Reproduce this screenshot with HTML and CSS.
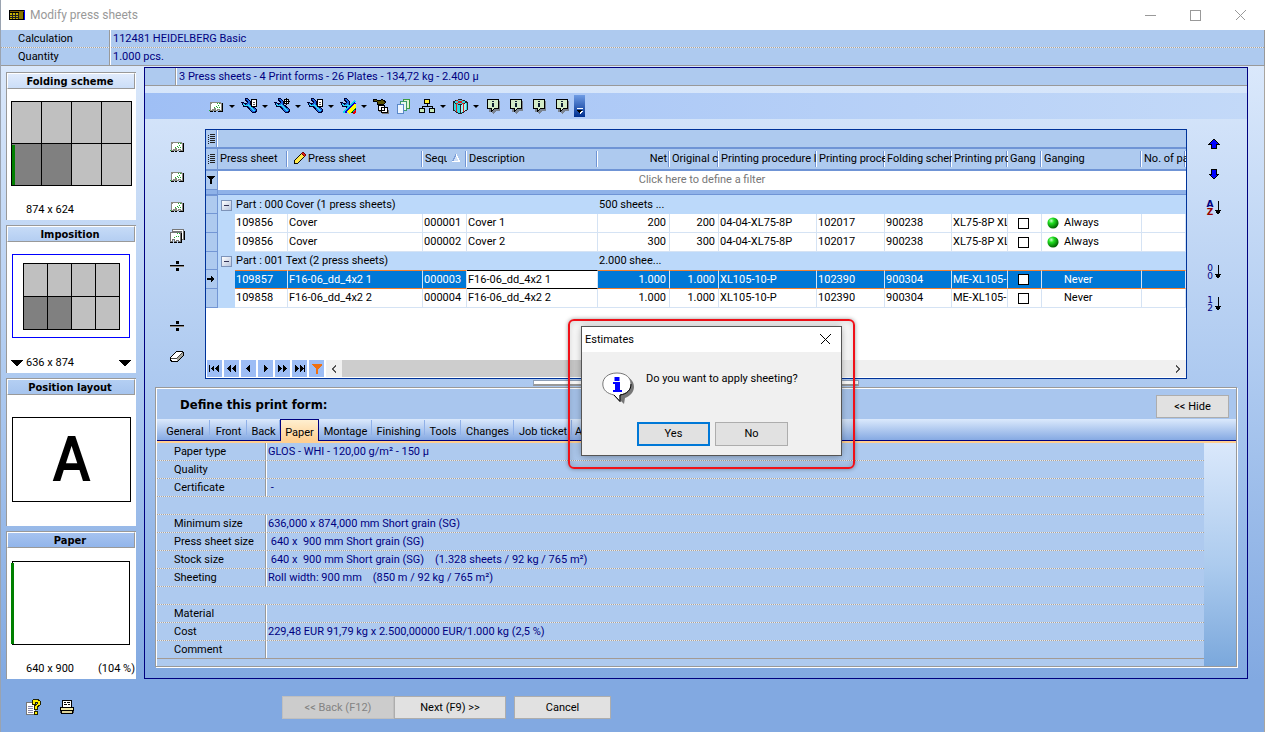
FILE: index.html
```html
<!DOCTYPE html>
<html lang="en">
<head>
<meta charset="utf-8">
<title>Modify press sheets</title>
<link rel="stylesheet" href="styles.css">
</head>
<body>
<svg class="defs" aria-hidden="true">
  <defs>
    <radialGradient id="ball" cx="35%" cy="30%" r="70%"><stop offset="0" stop-color="#c8ffc8"/><stop offset=".35" stop-color="#20e020"/><stop offset="1" stop-color="#006000"/></radialGradient>
    <symbol id="sheet" viewBox="0 0 16 16"><path d="M2.500 4.500h10v1h1v7h-2v-1h-2v1h-2v-2h-1v2h-1v-1h-1v1h-2v-7h1z" fill="#fff" stroke="#8a8a82"/><path d="M14 5v9M10 13.500h4M2 13.500h3M6 13.500h2" stroke="#000"/><path d="M1 12h1v1h-1zM9 5h1v1h-1zM11 5h1v1h-1zM10 7h1v1h-1zM8 8h1v1h-1zM6 9h1v1h-1zM11 9h1v1h-1zM9 9h1v1h-1z" fill="#1faf2f"/></symbol>
    <symbol id="sheets" viewBox="0 0 16 16"><path d="M3.500 1.500h11v10h-2v-8h-9z" fill="#fff" stroke="#777"/><path d="M1.500 4.500h10v9h-2v-1h-2v1h-2v-2h-2v2h-2z" fill="#fff" stroke="#777"/><path d="M12.500 5v9M9 14.500h4M15.500 3v9M1 14.500h3M5 14.500h3" stroke="#000"/><path d="M8 5h1v1h-1zM10 5h1v1h-1zM7 8h1v1h-1zM9 8h1v1h-1zM5 9h1v1h-1z" fill="#1faf2f"/></symbol>
    <symbol id="wrench" viewBox="0 0 16 16"><path d="M.5 4.500L3 8.500h3l5.500 6H14l1-1V11L9 6V3L6.500.5H4v1L6 3.500V5L4.500 6 2 4.500z" fill="#1d66e0" stroke="#00002c"/><path d="M2 6l2 1.500L7.500 7l6 6" stroke="#30d8f8" stroke-width="1" fill="none"/></symbol>
    <symbol id="divide" viewBox="0 0 16 16"><path d="M1 7h14v1H1zM7 3h3v3H7zM7 10h3v3H7z"/><path d="M1 8h14v1H1z" fill="#8a8278"/></symbol>
    <symbol id="note" viewBox="0 0 16 16"><path d="M4 3h11v10h-4l-2 3H8l-1-2H4z" fill="#666" opacity=".7"/><path d="M2.500 1.500h11v9h-4l-3 3v-3h-4z" fill="#d4ecc8" stroke="#000"/><path d="M7 3h2v1H7zM7 5h2v4H7z" fill="#123"/></symbol>
    <symbol id="sortArrow" viewBox="0 0 6 16"><path d="M3 1v13" stroke="#000"/><path d="M0 10h6l-2 4H2z"/></symbol>
    <symbol id="list" viewBox="0 0 8 10"><path d="M0 1h1v1H0zM0 3h1v1H0zM0 5h1v1H0zM0 7h1v1H0zM0 9h1v1H0zM2 0h5v1H2zM2 2h5v1H2zM2 4h5v1H2zM2 6h5v1H2zM2 8h5v1H2z" fill="#222"/></symbol>
    <symbol id="funnel" viewBox="0 0 10 10"><path d="M0 0h10v1L6 5v5H4V5L0 1z"/></symbol>
  </defs>
</svg>

<div class="window">
  <header class="titlebar">
    <svg class="app-icon" viewBox="0 0 16 10"><path d="M0 0h16v10H0z"/><path d="M1 1h14v1H1z" fill="#806000"/><path d="M1 3h9v6H1z" fill="#c8b400"/><path d="M3 3v6M6 3v6M9 3v6M1 5h9M1 7h9" stroke="#222"/><path d="M10 2h4v7h-4z" fill="#8a7600"/><path d="M15 0h1v10h-1z" fill="#00f"/></svg>
    <h1 class="title">Modify press sheets</h1>
    <div class="win-buttons">
      <button aria-label="Minimize"><svg viewBox="0 0 11 11"><path d="M0 5.500h11" stroke="#999"/></svg></button>
      <button aria-label="Maximize"><svg viewBox="0 0 11 11"><path d="M.5.500h10v10H.5z" fill="none" stroke="#999"/></svg></button>
      <button aria-label="Close"><svg viewBox="0 0 11 11"><path d="M.5.500l10 10M10.500.500l-10 10" stroke="#999"/></svg></button>
    </div>
  </header>
  <dl class="summary">
    <div><dt>Calculation</dt><dd>112481 HEIDELBERG Basic</dd></div>
    <div><dt>Quantity</dt><dd>1.000 pcs.</dd></div>
  </dl>

  <div class="workspace">
    <aside class="sidebar">
      <section class="card">
        <h2>Folding scheme</h2>
        <svg class="drawing" viewBox="0 0 128 118"><path d="M4.500 12.500h120v84h-120z" fill="#c0c0c0"/><path d="M5 54h60v42H5z" fill="#808080"/><path d="M4.500 12.500h120v84h-120zM34.500 12v84M64.500 12v84M94.500 12v84M4 54.500h120" fill="none" stroke="#000"/><path d="M5 56h3v40H5z" fill="#008000"/></svg>
        <p class="foot"><span>874 x 624</span></p>
      </section>
      <section class="card tint2">
        <h2>Imposition</h2>
        <svg class="drawing" viewBox="0 0 128 118"><path d="M5.500 12.500h117v83h-117z" fill="none" stroke="#00f"/><path d="M16.500 21.500h96v66h-96z" fill="#c0c0c0"/><path d="M17 54h48v33H17z" fill="#808080"/><path d="M16.500 21.500h96v66h-96zM40.500 21v66M64.500 21v66M88.500 21v66M16 54.500h96" fill="none" stroke="#000"/></svg>
        <p class="foot"><svg class="tri tri-left" viewBox="0 0 12 7"><path d="M0 0h12L6 7z"/></svg><span>636 x 874</span><svg class="tri" viewBox="0 0 12 7"><path d="M0 0h12L6 7z"/></svg></p>
      </section>
      <section class="card tint3">
        <h2>Position layout</h2>
        <div class="position-page">A</div>
      </section>
      <section class="card tint4">
        <h2>Paper</h2>
        <svg class="drawing" viewBox="0 0 128 118"><path d="M5.500 13.500h117v83h-117z" fill="none" stroke="#000"/><path d="M4 15h3v81H4z" fill="#008000"/></svg>
        <p class="foot"><span>640 x 900</span><span>(104 %)</span></p>
      </section>
    </aside>

    <main class="main">
      <p class="totals"><span>3 Press sheets - 4 Print forms - 26 Plates - 134,72 kg - 2.400 µ</span></p>
      <div class="toolbar" role="toolbar" aria-label="Press sheet tools">
        <button class="tool" aria-label="Press sheet"><svg viewBox="0 0 16 16"><use href="#sheet"/></svg></button><button class="drop" aria-label="More"></button>
        <button class="tool" aria-label="Edit sheet"><svg viewBox="0 0 16 16"><use href="#wrench"/><path d="M10.500 1.500h5v7h-5z" fill="#fff" stroke="#000"/><path d="M12 4.500h2M12 6.500h2" stroke="#555"/></svg></button><button class="drop" aria-label="More"></button>
        <button class="tool" aria-label="Edit marks"><svg viewBox="0 0 16 16"><use href="#wrench"/><circle cx="12.500" cy="3.500" r="2.500" fill="#fff" stroke="#000"/><path d="M12.500 0v7M9 3.500h7" stroke="#000"/></svg></button><button class="drop" aria-label="More"></button>
        <button class="tool" aria-label="Edit page"><svg viewBox="0 0 16 16"><use href="#wrench"/><path d="M10.500 1.500h5v7h-5z" fill="#fff" stroke="#000"/><path d="M12 4.500h2M12 6.500h2" stroke="#555"/></svg></button><button class="drop" aria-label="More"></button>
        <button class="tool" aria-label="Edit colours"><svg viewBox="0 0 16 16"><use href="#wrench"/><path d="M3 15L15 3" stroke="#10d8f0" stroke-width="2"/><path d="M5 15L15 5" stroke="#10c" stroke-width="2"/><path d="M8 15l8-8" stroke="#ff0" stroke-width="3"/><path d="M11 15l5-5" stroke="#080" stroke-width="1"/><path d="M13 16l3-3" stroke="#e00" stroke-width="2"/></svg></button><button class="drop" aria-label="More"></button>
        <button class="tool" aria-label="Move sheets"><svg viewBox="0 0 16 16"><path d="M6 12h10v4H9v-2H6z" fill="#777"/><path d="M0 1h2l2 1h4l1-1 4 3-3 3-1-1H4v-2L0 3z" fill="#5a5200" stroke="#000"/><path d="M5.500 7.500h6v5h-6zM8.500 9.500h6v5h-6z" fill="#fff" stroke="#000"/></svg></button>
        <button class="tool" aria-label="Copy sheets"><svg viewBox="0 0 16 16"><path d="M7.500 1.500h6v9h-6z" fill="#dff5d0" stroke="#3c9a3c"/><path d="M4.500 3.500h6v9h-6z" fill="#e8f8ee" stroke="#3c9a6c"/><path d="M1.500 6.500h6v9h-6z" fill="#eef6ff" stroke="#5a88c8"/></svg></button>
        <button class="tool" aria-label="Structure"><svg viewBox="0 0 16 16"><path d="M8 5v4M3 11V8.500h10V11" fill="none" stroke="#000"/><path d="M5.500 1.500h5v4h-5z" fill="#ffef30" stroke="#000"/><path d="M.5 10.500h5v4h-5zM10.500 10.500h5v4h-5z" fill="#c8e8b8" stroke="#000"/></svg></button><button class="drop" aria-label="More"></button>
        <button class="tool" aria-label="Package"><svg viewBox="0 0 16 16"><path d="M1 4l7-3 7 3v8l-7 4-7-4z" fill="#30d8e0" stroke="#222"/><path d="M8 7v8l6-3V5z" fill="#a0f4f4"/><path d="M1 4l7 3 7-3M8 7v9" stroke="#222" fill="none"/><path d="M4.500 2.500l7 3V14M11.500 2.500l-7 3V14" stroke="#d22" fill="none"/></svg></button><button class="drop" aria-label="More"></button>
        <button class="tool" aria-label="Info 1"><svg viewBox="0 0 16 16"><use href="#note"/></svg></button>
        <button class="tool" aria-label="Info 2"><svg viewBox="0 0 16 16"><use href="#note"/></svg></button>
        <button class="tool" aria-label="Info 3"><svg viewBox="0 0 16 16"><use href="#note"/></svg></button>
        <button class="tool" aria-label="Info 4"><svg viewBox="0 0 16 16"><use href="#note"/></svg></button>
        <button class="overflow" aria-label="Toolbar options"><svg viewBox="0 0 7 7"><path d="M1 0h6v1H1z" fill="#fff"/><path d="M1 3h6L4 6z" fill="#fff"/><path d="M0 2h6L3 5z"/></svg></button>
      </div>

      <div class="grid-area">
        <div class="rail rail-left">
          <button aria-label="Add sheet"><svg viewBox="0 0 16 16"><use href="#sheet"/></svg></button>
          <button aria-label="Insert sheet"><svg viewBox="0 0 16 16"><use href="#sheet"/></svg></button>
          <button aria-label="Append sheet"><svg viewBox="0 0 16 16"><use href="#sheet"/></svg></button>
          <button aria-label="Duplicate sheets"><svg viewBox="0 0 16 16"><use href="#sheets"/></svg></button>
          <button aria-label="Split"><svg viewBox="0 0 16 16"><use href="#divide"/></svg></button>
          <span></span>
          <button aria-label="Split all"><svg viewBox="0 0 16 16"><use href="#divide"/></svg></button>
          <button aria-label="Erase"><svg viewBox="0 0 16 16"><path d="M1.500 9.500l6-6h6l1 1.500v2l-6 6h-6l-1-1z" fill="#fff" stroke="#000"/><path d="M8 10l6-5v2l-5.500 5.500H8z" fill="#a8a8a0"/><path d="M2 10h6M8 10l6-6" stroke="#444"/></svg></button>
        </div>

        <div class="grid">
          <div class="group-band"><span class="handle"><svg viewBox="0 0 8 10"><use href="#list"/></svg></span></div>
          <table>
            <colgroup><col class="c-ind"><col class="c-indent"><col class="c-no"><col class="c-name"><col class="c-seq"><col class="c-desc"><col class="c-net"><col class="c-orig"><col class="c-proc"><col class="c-procno"><col class="c-fold"><col class="c-press"><col class="c-gang"><col class="c-ganging"><col></colgroup>
            <thead>
              <tr>
                <th class="ind"><svg viewBox="0 0 8 10"><use href="#list"/></svg></th>
                <th colspan="2">Press sheet</th>
                <th><svg class="pencil" viewBox="0 0 14 14"><path d="M1 13l1-4 7-7 3 3-7 7z" fill="#ffe94a" stroke="#000"/><path d="M9 2l2-2 3 3-2 2z" fill="#e02020" stroke="#600"/></svg>Press sheet</th>
                <th><span class="seq">Sequ</span><svg class="asc" viewBox="0 0 8 8"><path d="M4 .5L.5 7.500h7z" fill="#cfe0f8" stroke="#fff"/><path d="M4 .5L.5 7.500" stroke="#7d9fd8"/></svg></th>
                <th>Description</th><th class="num">Net</th><th>Original c</th><th>Printing procedure l</th><th>Printing proce</th><th>Folding schem</th><th>Printing pro</th><th>Gang</th><th>Ganging</th><th>No. of pa</th>
              </tr>
              <tr class="filter"><td class="ind"><svg viewBox="0 0 10 10"><use href="#funnel"/></svg></td><td colspan="14">Click here to define a filter</td></tr>
              <tr class="band"><td class="ind"></td><td colspan="14"></td></tr>
            </thead>
            <tbody>
              <tr class="group"><td class="ind"></td><td colspan="5"><button class="fold" aria-label="Collapse"></button>Part : 000 Cover (1 press sheets)</td><td colspan="9">500 sheets ...</td></tr>
              <tr><td class="ind"></td><td class="indent"></td><td>109856</td><td>Cover</td><td>000001</td><td>Cover 1</td><td class="num">200</td><td class="num">200</td><td>04-04-XL75-8P</td><td>102017</td><td>900238</td><td>XL75-8P XL</td><td><input type="checkbox" aria-label="Gang"></td><td><svg class="ball" viewBox="0 0 13 13"><circle cx="6.500" cy="6.500" r="6" fill="url(#ball)"/></svg>Always</td><td></td></tr>
              <tr><td class="ind"></td><td class="indent"></td><td>109856</td><td>Cover</td><td>000002</td><td>Cover 2</td><td class="num">300</td><td class="num">300</td><td>04-04-XL75-8P</td><td>102017</td><td>900238</td><td>XL75-8P XL</td><td><input type="checkbox" aria-label="Gang"></td><td><svg class="ball" viewBox="0 0 13 13"><circle cx="6.500" cy="6.500" r="6" fill="url(#ball)"/></svg>Always</td><td></td></tr>
              <tr class="group"><td class="ind"></td><td colspan="5"><button class="fold" aria-label="Collapse"></button>Part : 001 Text (2 press sheets)</td><td colspan="9">2.000 shee...</td></tr>
              <tr class="selected"><td class="ind"><svg viewBox="0 0 10 10"><path d="M0 4h5V1l4 4-4 4V6H0z"/></svg></td><td class="indent"></td><td>109857</td><td>F16-06_dd_4x2 1</td><td>000003</td><td class="editing">F16-06_dd_4x2 1</td><td class="num">1.000</td><td class="num">1.000</td><td>XL105-10-P</td><td>102390</td><td>900304</td><td>ME-XL105-</td><td><input type="checkbox" aria-label="Gang"></td><td class="plain">Never</td><td></td></tr>
              <tr><td class="ind"></td><td class="indent"></td><td>109858</td><td>F16-06_dd_4x2 2</td><td>000004</td><td>F16-06_dd_4x2 2</td><td class="num">1.000</td><td class="num">1.000</td><td>XL105-10-P</td><td>102390</td><td>900304</td><td>ME-XL105-</td><td><input type="checkbox" aria-label="Gang"></td><td class="plain">Never</td><td></td></tr>
            </tbody>
          </table>
          <div class="navigator">
            <button aria-label="First"><svg viewBox="0 0 11 7"><path d="M0 0h1v7H0zM5 0v7L2 3.500zM10 0v7L6 3.500z"/></svg></button>
            <button aria-label="Previous page"><svg viewBox="0 0 11 7"><path d="M5 0v7L1 3.500zM10 0v7L6 3.500z"/></svg></button>
            <button aria-label="Previous"><svg viewBox="0 0 11 7"><path d="M7 0v7L3 3.500z"/></svg></button>
            <button aria-label="Next"><svg viewBox="0 0 11 7"><path d="M4 0v7l4-3.500z"/></svg></button>
            <button aria-label="Next page"><svg viewBox="0 0 11 7"><path d="M1 0v7l4-3.500zM6 0v7l4-3.500z"/></svg></button>
            <button aria-label="Last"><svg viewBox="0 0 11 7"><path d="M10 0h1v7h-1zM1 0v7l4-3.500zM6 0v7l4-3.500z"/></svg></button>
            <button aria-label="Filter"><svg class="funnel" viewBox="0 0 10 10"><use href="#funnel"/></svg></button>
            <div class="scroll"><svg viewBox="0 0 6 8"><path d="M5 .5L1.500 4 5 7.500" fill="none" stroke="#555" stroke-width="2"/></svg><span class="thumb"></span><svg viewBox="0 0 6 8"><path d="M1 .5L4.500 4 1 7.500" fill="none" stroke="#555" stroke-width="2"/></svg></div>
          </div>
        </div>

        <div class="rail rail-right">
          <button aria-label="Move up"><svg viewBox="0 0 12 12"><path d="M6 1l5 5H8.500v4.500h-5V6H1z" fill="#00f" stroke="#000"/></svg></button>
          <button aria-label="Move down"><svg viewBox="0 0 12 12"><path d="M6 11l5-5H8.500V1.500h-5V6H1z" fill="#00f" stroke="#000"/></svg></button>
          <button class="sort bold" aria-label="Sort A to Z"><span class="pair"><i>A</i><i class="red">Z</i></span><svg viewBox="0 0 6 16"><use href="#sortArrow"/></svg></button>
          <span class="blank"></span>
          <button class="sort" aria-label="Sort by zero"><span class="pair"><i>0</i><i>0</i></span><svg viewBox="0 0 6 16"><use href="#sortArrow"/></svg></button>
          <button class="sort" aria-label="Sort by number"><span class="pair"><i>1</i><i>2</i></span><svg viewBox="0 0 6 16"><use href="#sortArrow"/></svg></button>
        </div>
      </div>
      <div class="splitter"></div>

      <section class="details">
        <div class="details-head"><h2>Define this print form:</h2><button class="btn hide">&lt;&lt; Hide</button></div>
        <div class="tabs" role="tablist">
          <button role="tab">General</button><button role="tab">Front</button><button role="tab">Back</button><button role="tab" class="active" aria-selected="true">Paper</button><button role="tab">Montage</button><button role="tab">Finishing</button><button role="tab">Tools</button><button role="tab">Changes</button><button role="tab">Job ticket</button><button role="tab">A</button>
        </div>
        <div class="details-body">
          <dl class="props">
            <div><dt>Paper type</dt><dd>GLOS - WHI - 120,00 g/m² - 150 µ</dd></div>
            <div><dt>Quality</dt><dd></dd></div>
            <div><dt>Certificate</dt><dd> -</dd></div>
            <div class="empty"></div>
            <div><dt>Minimum size</dt><dd>636,000 x 874,000 mm Short grain (SG)</dd></div>
            <div><dt>Press sheet size</dt><dd> 640 x  900 mm Short grain (SG)</dd></div>
            <div><dt>Stock size</dt><dd> 640 x  900 mm Short grain (SG)    (1.328 sheets / 92 kg / 765 m²)</dd></div>
            <div><dt>Sheeting</dt><dd>Roll width: 900 mm    (850 m / 92 kg / 765 m²)</dd></div>
            <div class="empty"></div>
            <div><dt>Material</dt><dd></dd></div>
            <div><dt>Cost</dt><dd>229,48 EUR 91,79 kg x 2.500,00000 EUR/1.000 kg (2,5 %)</dd></div>
            <div><dt>Comment</dt><dd></dd></div>
          </dl>
          <div class="gutter"></div>
        </div>
      </section>
    </main>
  </div>

  <footer class="footer">
    <div class="footer-icons">
      <button aria-label="Help"><svg viewBox="0 0 16 16"><path d="M1.500 3.500h7l2 2v10h-9z" fill="#fff" stroke="#777"/><path d="M3 7.500h5M3 9.500h5M3 11.500h5M3 13.500h5" stroke="#88a"/><path d="M7 5V2l2-1.500h4L15 2v4l-3 2v2H9V7l3-2V3h-2v2z" fill="#ffef00" stroke="#220"/><path d="M9 12h3v3H9z" fill="#ffef00" stroke="#220"/></svg></button>
      <button aria-label="Print"><svg viewBox="0 0 16 16"><path d="M1 9h14v5H1z" fill="#444"/><path d="M3.500 1.500h9v7h-9z" fill="#fff" stroke="#000"/><path d="M5 3.500h2M8 3.500h3M5 5.500h3M9 5.500h2" stroke="#000"/><path d="M1.500 8.500h13v3h-13z" fill="#f0e8a8" stroke="#000"/><path d="M2.500 11.500h11v3h-11z" fill="#ddd49a" stroke="#000"/></svg></button>
    </div>
    <div class="wizard"><button class="btn" disabled>&lt;&lt; Back (F12)</button><button class="btn">Next (F9) &gt;&gt;</button><button class="btn cancel">Cancel</button></div>
  </footer>
</div>

<div class="callout">
  <div class="dialog" role="dialog" aria-labelledby="dlg-title">
    <div class="dialog-title"><h2 id="dlg-title">Estimates</h2><button aria-label="Close"><svg viewBox="0 0 11 11"><path d="M.5.500l10 10M10.500.500l-10 10" stroke="#000"/></svg></button></div>
    <div class="dialog-body">
      <svg class="info" viewBox="0 0 32 32"><path d="M18 4c10 0 14 5 14 11 0 5-4 9-9 11l-1 6-6-6z" fill="#777"/><path d="M15 1C6 1 .8 6 .8 12S5 21.500 12 23l6 6.500V23c7-1 11-5 11-11S24 1 15 1z" fill="#fff" stroke="#777"/><path d="M29 12c0 6-4 10-11 11v6.500L12 23" fill="none" stroke="#000"/><path d="M12.500 5h5v4h-5zM11 10h7v8h2v2h-9v-2h2v-6h-2z" fill="#00f"/></svg>
      <p>Do you want to apply sheeting?</p>
    </div>
    <div class="dialog-actions"><button class="btn default">Yes</button><button class="btn">No</button></div>
  </div>
</div>
</body>
</html>
```
FILE: styles.css
```css
* { box-sizing: border-box; }
body {
  margin: 0;
  background: #fff;
  color: #000;
  font: 11px/18px Roboto, "Noto Sans", sans-serif;
}
h1, h2, p, dl, dd { margin: 0; }
button { margin: 0; padding: 0; border: 0; background: none; color: inherit; font: inherit; white-space: nowrap; }
svg { display: block; flex: none; shape-rendering: crispEdges; }
.defs { position: absolute; width: 0; height: 0; }

.window { display: flex; flex-direction: column; min-height: 100vh; border-left: 1px solid #9aa3b0; }

/* Title bar */
.titlebar { display: flex; align-items: center; height: 30px; padding: 0 12px 0 8px; background: #fff; }
.app-icon { width: 16px; height: 10px; }
.title { flex: 1; margin-left: 5px; color: #999; font: 12px/18px Roboto, "Noto Sans", sans-serif; }
.win-buttons { display: flex; gap: 20px; }
.win-buttons button { display: grid; place-items: center; width: 25px; height: 25px; }
.win-buttons svg { width: 11px; height: 11px; }

/* Calculation and quantity */
.summary { background: #aecaef; border-bottom: 1px solid #999; border-right: 1px solid #999; }
.summary div { display: flex; height: 18px; background: repeating-linear-gradient(90deg, #b0a294 0 1px, #e6ecf2 1px 2px) bottom / 100% 1px no-repeat; }
.summary div + div { height: 17px; background: none; line-height: 17px; }
.summary dt { width: 109px; padding-left: 17px; border-right: 1px solid #999; }
.summary dd { flex: 1; padding-left: 2px; border-left: 1px solid #fff; color: #000080; }

.workspace {
  display: flex;
  gap: 8px;
  padding: 1px 16px 0 5px;
  border-right: 1px solid #a9a59f;
  background: linear-gradient(#dae8fb, #aecaf0 50%, #82a9e1);
}

/* Left cards */
.sidebar { display: flex; flex-direction: column; gap: 5px; width: 130px; padding-top: 5px; }
.card { height: 148px; border-top: 1px solid #999; border-left: 1px solid #999; background: #fff; padding-right: 1px; overflow: hidden; }
.card h2 {
  height: 16px;
  padding-right: 2px;
  border: 1px solid #999;
  border-top-color: #fff;
  border-left-color: #fff;
  background: linear-gradient(#e0ebfc, #cbdef8);
  font: bold 11px/15px "DejaVu Sans Condensed", "DejaVu Sans", sans-serif;
  text-align: center;
}
.tint2 h2 { background: linear-gradient(#c6dbf7, #b4cef2); }
.tint3 h2 { background: linear-gradient(#b4cff3, #a6c4ee); }
.tint4 h2 { background: linear-gradient(#a6c3f0, #92b5ea); }
.drawing { width: 128px; height: 118px; margin-bottom: -6px; }
.foot { display: flex; align-items: center; justify-content: space-between; height: 18px; padding-left: 19px; white-space: nowrap; }
.tri { width: 12px; height: 7px; margin-right: 4px; }
.tri-left { margin-left: -15px; margin-right: 3px; }
.tri-left + span { flex: 1; }
.position-page {
  margin: 22px 4px 0 5px;
  height: 85px;
  border: 1px solid #000;
  font: 58px/84px "DejaVu Sans Condensed", "DejaVu Sans", sans-serif;
  -webkit-text-stroke: 2px #000;
  text-align: center;
}

/* Main frame */
.main { flex: 1; min-width: 0; height: 612px; border: 1px solid #000080; margin-bottom: 1px; }
.totals { height: 18px; border-bottom: 1px solid #999; background: #aecaef; padding-left: 30px; line-height: 17px; color: #000080; }
.totals span { display: block; padding-left: 3px; border-left: 1px solid #999; box-shadow: inset 1px 0 #fff; }
.toolbar { display: flex; align-items: center; height: 26px; margin-top: 7px; padding-left: 59px; background: linear-gradient(90deg, #9fbff5, #c3d9f8); }
.tool { display: grid; place-items: center; width: 23px; height: 23px; }
.tool svg { width: 16px; height: 16px; }
.drop { display: grid; place-items: center; width: 10px; height: 23px; }
.drop::before { content: ""; border: 3px solid transparent; border-top-color: #000; border-bottom: 0; }
.overflow { display: flex; align-items: flex-end; justify-content: flex-end; width: 11px; height: 22px; margin-left: 1px; padding: 0 2px 2px 0; background: linear-gradient(#6f9ce4, #003090); }
.overflow svg { width: 7px; height: 7px; }

/* Grid with icon rails */
.grid-area { display: flex; margin-top: 10px; }
.rail { display: flex; flex-direction: column; }
.rail-left { width: 60px; padding: 2px 0 0 3px; }
.rail-left > * { display: grid; place-items: center; height: 30px; }
.rail-left svg { width: 16px; height: 16px; }
.rail-right { width: 60px; padding-right: 6px; }
.rail-right > * { display: flex; align-items: center; justify-content: center; height: 32px; }
.rail-right > :nth-child(-n+2) { height: 30px; }
.rail-right > :nth-child(2) { margin-bottom: 3px; }
.rail-right svg { width: 12px; height: 12px; }
.rail-right .sort { gap: 2px; }
.rail-right .sort svg { width: 6px; height: 16px; }
.pair { display: flex; flex-direction: column; color: #000080; font: 9px/8px "DejaVu Sans", sans-serif; }
.pair i { font-style: normal; }
.bold .pair { font-weight: bold; }
.pair .red { color: #900; }

.grid { display: flex; flex-direction: column; flex: 1; min-width: 0; height: 250px; border: 1px solid #003399; background: #fff; }
.group-band { height: 19px; background: #aecaef; border-bottom: 2px solid #6f94d5; }
.handle { display: flex; align-items: center; width: 11px; height: 17px; padding-left: 2px; border-right: 1px solid #6f94d5; box-shadow: 1px 0 #fff; }
.handle svg, .ind svg { width: 8px; height: 10px; }
table { width: 100%; border-collapse: separate; border-spacing: 0; table-layout: fixed; }
.c-ind { width: 12px; } .c-indent { width: 17px; } .c-no { width: 53px; } .c-name { width: 135px; }
.c-seq { width: 44px; } .c-desc { width: 131px; } .c-net { width: 72px; } .c-orig { width: 49px; }
.c-proc { width: 98px; } .c-procno { width: 68px; } .c-fold { width: 67px; } .c-press { width: 56px; }
.c-gang { width: 34px; } .c-ganging { width: 100px; }
th, td { height: 19px; padding: 0 1px; overflow: hidden; white-space: nowrap; text-align: left; font-weight: normal; line-height: 16px; vertical-align: middle; }
th { height: 22px; padding: 0 2px 1px; border-bottom: 2px solid #6f94d5; background: linear-gradient(90deg, #6f94d5 1px, #fff 1px) right top 2px / 2px 16px no-repeat, #aecaef; }
.num { text-align: right; padding-right: 3px; }
.pencil { display: inline-block; width: 13px; height: 13px; margin: 0 2px 0 3px; vertical-align: -3px; }
.seq { display: inline-block; width: 22px; height: 16px; overflow: hidden; vertical-align: top; }
.asc { display: inline-block; width: 8px; height: 8px; margin-left: 5px; }
.ind { padding: 0 1px; border-right: 1px solid #7396d4; border-bottom: 1px solid #7396d4; background: #aecaef; }
th.ind { border-bottom: 2px solid #6f94d5; background: #aecaef; padding: 0 1px 0 2px; }
.filter td { height: 19px; padding-bottom: 1px; text-align: center; color: #777; }
.band td { height: 6px; padding: 0; line-height: 0; background: linear-gradient(#8fb2e8 4px, #6f94d5 4px, #6f94d5 5px, #bcd9fa 5px); }
tbody td { border-right: 1px solid #d5e3f4; border-bottom: 1px solid #d5e3f4; }
tbody .ind { border-right: 1px solid #7396d4; border-bottom: 1px solid #7396d4; }
.group td { height: 18px; border: 0; }
.group td.ind { border-right: 1px solid #7396d4; border-bottom: 1px solid #7396d4; }
.group td:not(.ind), .indent { background: #bcd9fa; }
.indent { border: 0; }
.fold { display: inline-block; width: 11px; height: 11px; margin: 0 4px 0 2px; vertical-align: -2px; border: 1px solid #7d93b8; background: linear-gradient(#335, #335) center / 5px 1px no-repeat, linear-gradient(135deg, #fff, #b8c4dc); }
input[type="checkbox"] { appearance: none; display: block; width: 11px; height: 11px; margin: 0 auto 0 9px; border: 1px solid #000; background: #fff; }
.ball { display: inline-block; width: 12px; height: 12px; margin: 0 5px 0 4px; vertical-align: -3px; shape-rendering: auto; }
.plain { padding-left: 22px; }
.selected td:not(.ind):not(.indent) { border-top: 1px solid #f08030; border-bottom: 1px solid #f08030; background: #0078d7; color: #fff; }
.selected td.editing:not(.ind):not(.indent) { border-top-color: #000; border-bottom-color: #000; background: #fff; color: #000; }
.navigator { display: flex; gap: 2px; height: 17px; margin: auto 0 1px 1px; }
.navigator button { display: grid; place-items: center; width: 15px; background: #9dbdf5; }
.navigator button svg { width: 11px; height: 7px; }
.navigator button .funnel { width: 10px; height: 10px; fill: #f07010; }
.scroll { display: flex; flex: 1; align-items: center; justify-content: space-between; padding-right: 5px; padding-left: 5px; background: #f0f0f0; }
.scroll svg { width: 6px; height: 8px; }
.thumb { width: 45%; height: 17px; margin-left: 5px; margin-right: auto; background: #cdcdcd; }
.splitter { width: 326px; height: 6px; margin: 1px auto; border: 1px solid #8fa0b8; border-bottom: 2px solid #999; background: #fff; }

/* Print form details */
.details { margin: 0 10px; border: 1px solid #999; box-shadow: inset 1px 1px #fff, 1px 1px #fff; padding: 1px 0 0 1px; background: #a9c6ee; }
.details-head { display: flex; align-items: center; justify-content: space-between; height: 30px; padding: 0 7px 0 23px; }
.details-head h2 { padding-top: 2px; font: bold 13px/18px "DejaVu Sans Condensed", "DejaVu Sans", sans-serif; }
.btn { height: 23px; border: 1px solid #adadad; background: #e1e1e1; color: #000; }
.hide { width: 73px; margin-top: 5px; }
.tabs { display: grid; grid-template-columns: 53px 37px 33px 39px 53px 53px 36px 53px 58px 40px; align-items: end; height: 24px; border-bottom: 2px solid #ffcf90; background: linear-gradient(#dbe9fc, #86aae3 21px, #000080 21px); }
.tabs button { height: 20px; margin-bottom: 1px; padding-top: 4px; background: linear-gradient(#8fb0e8, #8fb0e8) right top / 1px 15px no-repeat; line-height: 16px; text-align: center; }
.tabs button:first-child { padding-left: 3px; }
.tabs button:last-child { text-align: left; padding-left: 3px; }
.tabs .active { height: 22px; margin-bottom: 0; border: 1px solid #000080; border-bottom: 0; background: linear-gradient(#ffefd0, #ffcf90); }
.details-body { display: flex; }
.props { flex: 1; padding-bottom: 7px; background: #aecaef; }
.props div { display: flex; height: 18px; background: repeating-linear-gradient(90deg, #b0a294 0 1px, #e6ecf2 1px 2px) bottom / 100% 1px no-repeat; }
.props div:last-child { background: none; border-bottom: 1px solid #a39a94; }
.props dt { width: 109px; height: 17px; padding-left: 17px; border-right: 1px solid #999; }
.props dd { flex: 1; height: 17px; padding-left: 1px; border-left: 1px solid #fff; color: #000080; white-space: pre; }
.gutter { width: 32px; background: linear-gradient(#dae8fb, #accbee 55%, #7ba8dc); }

/* Footer */
.footer { flex: 1; display: flex; align-items: flex-start; padding: 16px 0 0 24px; border-right: 1px solid #a9a59f; background: #82a9e1; }
.footer-icons { display: flex; gap: 18px; width: 257px; padding-top: 3px; }
.footer-icons svg { width: 16px; height: 16px; }
.wizard { display: flex; }
.wizard .btn { width: 112px; }
.wizard .btn:disabled { border-color: #bfbfbf; background: #ccc; color: #838383; }
.wizard .cancel { width: 97px; margin-left: 8px; }

/* Confirmation dialog with highlight frame */
.callout { position: absolute; left: 568px; top: 319px; padding: 5px 11px 11px; border: 2px solid #f01018; border-radius: 6px; box-shadow: 0 0 4px rgba(0,0,0,.4), inset 0 0 8px rgba(0,0,0,.2); }
.dialog { width: 261px; border: 1px solid #555; background: #f0f0f0; box-shadow: 0 1px 8px rgba(0,0,0,.35); }
.dialog-title { display: flex; align-items: center; justify-content: space-between; height: 25px; padding: 0 10px 0 3px; background: #fff; }
.dialog-title h2 { font: 11px/18px Roboto, "Noto Sans", sans-serif; }
.dialog-title svg { width: 11px; height: 11px; }
.dialog-body { display: flex; gap: 12px; height: 70px; padding: 18px 0 0 20px; }
.info { width: 32px; height: 32px; margin-top: 2px; shape-rendering: auto; }
.dialog-actions { display: flex; justify-content: center; gap: 5px; padding: 0 0 9px 2px; }
.dialog-actions .btn { width: 73px; height: 24px; }
.dialog-actions .default { border: 2px solid #0078d7; }
```
